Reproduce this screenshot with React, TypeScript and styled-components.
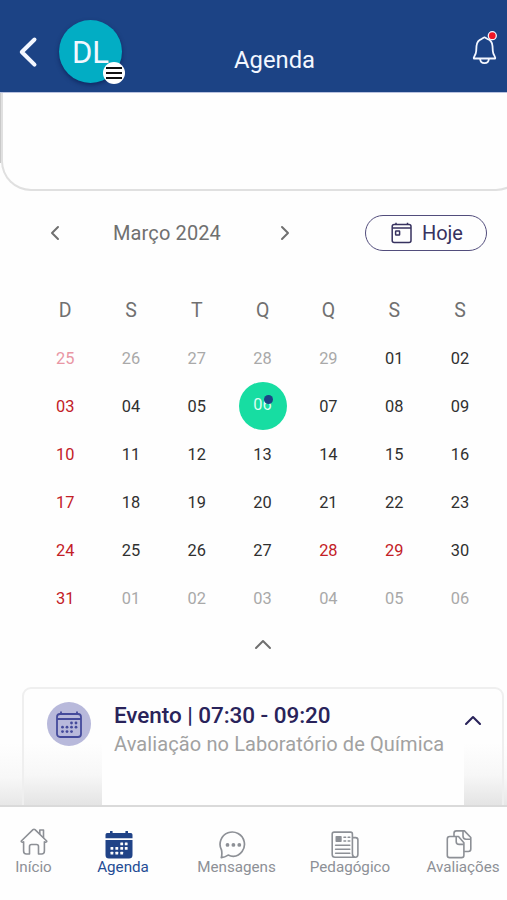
import React from "react";
import styled, { createGlobalStyle } from "styled-components";

const GlobalStyle = createGlobalStyle`
  * { box-sizing: border-box; }
  html, body { margin: 0; background: #fefefe; }
  body { font-family: Roboto, "Noto Sans", sans-serif; overflow: hidden; }
  svg { display: block; flex: none; }
`;

const BareButton = styled.button`
  font: inherit;
  color: inherit;
  background: none;
  border: 0;
  padding: 0;
`;

const Screen = styled.div`
  width: 507px;
  height: 900px;
  display: flex;
  flex-direction: column;
  overflow: hidden;
  background: #fefefe;
`;

const Header = styled.header`
  height: 93px;
  flex: none;
  display: grid;
  grid-template-columns: 59px 64px 1fr 36px;
  align-items: start;
  background: #1c4385;
  border-bottom: 1px solid #b9c2df;
  color: #f3f7ff;
`;

const BackButton = styled(BareButton)`
  padding: 36px 0 0 18px;
`;

const Avatar = styled.div`
  position: relative;
  width: 63px;
  height: 63px;
  margin-top: 20px;
  border-radius: 50%;
  background: #02adc4;
  box-shadow: 0 2px 4px rgba(5, 20, 70, 0.55);
  text-align: center;
  font-size: 31px;
  line-height: 66px;
`;

const MenuBadge = styled.span`
  position: absolute;
  left: 44px;
  top: 42px;
  width: 22px;
  height: 22px;
  border-radius: 50%;
  background: #fff;
  display: grid;
  place-items: center;
`;

const Title = styled.h1`
  margin: 46px 0 0 111px;
  font-size: 23.8px;
  line-height: 28px;
  font-weight: 400;
`;

const BellButton = styled(BareButton)`
  padding: 29px 0 0 0;
`;

const Content = styled.main`
  flex: 1;
  min-height: 0;
  overflow: hidden;
  background: linear-gradient(to bottom, #fefefe 650px, #f8f8f8 684px, #e6e6e6 714px);
`;

const BannerRow = styled.div`
  display: flex;
  align-items: flex-start;
  height: 98px;
`;

const BannerEdge = styled.span`
  flex: none;
  width: 1px;
  height: 70px;
  background: #c9c9c9;
`;

const Banner = styled.section`
  flex: none;
  width: 525px;
  height: 98px;
  border: 2px solid #e0e0e0;
  border-top: 0;
  border-radius: 0 0 30px 30px;
  background: #fefefe;
`;

const MonthBar = styled.div`
  display: grid;
  grid-template-columns: 20px 210px 20px 1fr 122px;
  align-items: center;
  height: 36px;
  margin: 24px 20px 0 45px;
  color: #707070;
  font-size: 20px;
  letter-spacing: 0.12px;
`;

const Month = styled.span`
  text-align: center;
  padding-right: 6px;
`;

const TodayButton = styled(BareButton)`
  height: 36px;
  display: flex;
  align-items: center;
  gap: 9px;
  padding: 0 0 1px 25px;
  border: 1.5px solid #524d7c;
  border-radius: 18px;
  color: #37325f;
  letter-spacing: -0.1px;
`;

const Calendar = styled.div`
  display: grid;
  grid-template-columns: repeat(7, 65.8px);
  grid-auto-rows: 48px;
  margin: 35px 0 0 32.3px;
`;

const Weekday = styled.div`
  display: grid;
  place-items: center;
  color: #707070;
  font-size: 19.5px;
`;

type Tone = "normal" | "holiday" | "outside" | "outsideHoliday" | "selected";

const tones: Record<Tone, string> = {
  normal: "#303030",
  holiday: "#c32026",
  outside: "#a9a9a9",
  outsideHoliday: "#e996a4",
  selected: "#dcfff3",
};

const Day = styled.div<{ $tone: Tone }>`
  display: grid;
  place-items: center;
  font-size: 16.4px;
  color: ${(p) => tones[p.$tone]};
`;

const SelectedDay = styled.span`
  position: relative;
  width: 48px;
  height: 48px;
  border-radius: 50%;
  background: #17dda2;
  text-align: center;
  line-height: 45px;
`;

const EventDot = styled.i`
  position: absolute;
  left: 25px;
  top: 13px;
  width: 9px;
  height: 9px;
  border-radius: 50%;
  background: #1c4385;
`;

const Collapse = styled(BareButton)`
  display: flex;
  width: 18px;
  margin: 17px 0 0 254px;
  color: #707070;
`;

const EventCard = styled.article`
  display: grid;
  grid-template-columns: 78px 1fr 38px;
  align-items: start;
  height: 140px;
  margin: 37px 3px 0 22px;
  border: 2px solid #efefef;
  border-radius: 9px;
  background: linear-gradient(to bottom, #fefefe 54px, #f7f7f7 86px, #e4e4e4 116px);
`;

const EventIcon = styled.div`
  width: 44px;
  height: 44px;
  margin: 13px 0 0 23px;
  border-radius: 50%;
  background: #b8b9db;
  display: grid;
  place-items: center;
`;

const EventBody = styled.div`
  height: 136px;
  padding: 12px 0 0 12px;
  background: #fefefe;
`;

const EventTime = styled.h2`
  margin: 0;
  font-size: 22.5px;
  font-weight: 500;
  letter-spacing: -0.06px;
  line-height: 28px;
  color: #29235a;
  white-space: nowrap;
`;

const EventName = styled.p`
  margin: 2px 0 0;
  font-size: 20px;
  letter-spacing: 0.11px;
  line-height: 26px;
  color: #a1a1a1;
  white-space: nowrap;
`;

const EventToggle = styled(BareButton)`
  padding: 26px 0 0 0;
  color: #29235a;
`;

const TabBar = styled.nav`
  height: 95px;
  flex: none;
  display: grid;
  grid-template-columns: 67px 112px 115px 112px 114px;
  border-top: 2px solid #dadada;
  background: #fefefe;
`;

const Tab = styled(BareButton)<{ $active?: boolean }>`
  display: flex;
  flex-direction: column;
  align-items: center;
  padding-top: 21px;
  font-size: 15.2px;
  line-height: 20px;
  white-space: nowrap;
  color: ${(p) => (p.$active ? "#244c94" : "#8d9096")};
`;

const TabIcon = styled.span<{ $shift: number; $drop: number }>`
  display: block;
  height: 29px;
  padding-top: ${(p) => p.$drop}px;
  margin-left: ${(p) => p.$shift}px;
`;

const Chevron = ({ d, w, h, s = 2 }: { d: string; w: number; h: number; s?: number }) => (
  <svg width={w} height={h} viewBox={`0 0 ${w} ${h}`} fill="none" stroke="currentColor" strokeWidth={s} strokeLinecap="round" strokeLinejoin="round">
    <path d={d} />
  </svg>
);

const BellIcon = () => (
  <svg width="28" height="38" viewBox="0 0 28 38" fill="none" stroke="currentColor" strokeWidth="1.8" strokeLinejoin="round">
    <path d="M2.8 29.5c-.8-1.5 2.2-3 2.4-7.5l.3-5C6 12.4 8.3 10.6 10.8 9.8L13.5 8.3l2.7 1.5c3 .8 5 3.3 5.3 7.2l.3 5c.3 4.5 3.3 6 2.4 7.5Z" />
    <path d="M9.2 30c.2 5.5 8.4 5.5 8.6 0" />
    <circle cx="21.3" cy="6.7" r="4" fill="#f01525" stroke="#f3f7ff" strokeWidth="1.3" />
  </svg>
);

const TodayIcon = () => (
  <svg width="22" height="22" viewBox="0 0 22 22" fill="none" stroke="currentColor" strokeWidth="1.5">
    <rect x="1.2" y="2.6" width="18.8" height="17.8" rx="2" />
    <path d="M1.5 6h18.5M5 .7v2M16.5.7v2" />
    <rect x="4.6" y="9" width="4" height="4" rx=".5" />
  </svg>
);

const dots = [[15.5, 12], [20, 12], [6.5, 16.2], [11, 16.2], [15.5, 16.2], [20, 16.2], [6.5, 20.6], [11, 20.6], [15.5, 20.6]];

const CalendarIcon = () => (
  <svg width="26" height="27" viewBox="0 0 26 27" fill="none" stroke="#444a9b" strokeWidth="1.8">
    <rect x="1" y="3" width="24" height="23" rx="3" />
    <path d="M1 8h24M5 .5V3M21 .5V3" />
    {dots.map(([x, y]) => <circle key={`${x}-${y}`} cx={x} cy={y} r="1.4" stroke="none" fill="#444a9b" />)}
  </svg>
);

const AgendaIcon = () => (
  <svg width="28" height="28" viewBox="0 0 28 28" fill="#204387">
    <path d="M3 2h2V.8a1.3 1.3 0 0 1 2.6 0V2h12.8V.8a1.3 1.3 0 0 1 2.6 0V2h2a2 2 0 0 1 2.5 2v3.3H.5V4A2 2 0 0 1 3 2ZM.5 9h27v15a3.5 3.5 0 0 1-3.5 3.5H4A3.5 3.5 0 0 1 .5 24Z" />
    <g fill="#fefefe">
      {[[15.3, 11.5], [19.8, 11.5], [5.5, 16], [10.4, 16], [15.3, 16], [19.8, 16], [5.5, 20.7], [10.4, 20.7], [15.3, 20.7]].map(([x, y]) => (
        <rect key={`${x}-${y}`} x={x} y={y} width="2.8" height="2.8" rx=".5" />
      ))}
    </g>
  </svg>
);

const HomeIcon = () => (
  <svg width="28" height="28" viewBox="0 0 28 28" fill="none" stroke="currentColor" strokeWidth="1.6" strokeLinejoin="round" strokeLinecap="round">
    <path d="M1.3 13 13 1.7q1-.9 2 0L26.7 13c.3 1-1.2 1.7-2.3.8V23q0 3-2.8 3h-3.1v-7.5q0-2-2-2h-5q-2 0-2 2V26H6.4q-2.8 0-2.8-3v-9.2C2.5 14.7 1 14 1.3 13Z" />
    <path d="M19.8 6V2h3.7v7.6" />
  </svg>
);

const MessageIcon = () => (
  <svg width="28" height="28" viewBox="0 0 28 28" fill="none" stroke="currentColor" strokeWidth="1.7" strokeLinejoin="round">
    <path d="M2.3 26.7c.8-3.1.7-5.4.2-7.7A12.2 12.2 0 1 1 14.3 25.4c-1.8 0-3.6-.5-5.2-1.3-1.8 1.2-4.1 2.3-6.8 2.6Z" />
    <g fill="currentColor" stroke="none">
      <circle cx="8.5" cy="13.9" r="1.9" />
      <circle cx="14.4" cy="13.9" r="1.9" />
      <circle cx="20.3" cy="13.9" r="1.9" />
    </g>
  </svg>
);

const NewsIcon = () => (
  <svg width="28" height="28" viewBox="0 0 28 28" fill="none" stroke="currentColor" strokeWidth="1.6" strokeLinejoin="round">
    <path d="M24.4 26.3H4q-2.8 0-2.8-2.8V3q0-1.9 1.9-1.9h16.5q1.8 0 1.8 1.8v20.2q.3 3.2 3 3.2 2.5 0 2.5-3V9q0-2.4-2.3-2.4h-3.2" />
    <path d="M13 6.3h1.6M17.2 6.3h1.6M13 10h1.6M17.2 10h1.6M4.6 14.3h14.2M4.6 18.3h14.2M4.6 22.3h14.2" strokeLinecap="round" />
    <rect x="4.5" y="5" width="6.2" height="6" rx=".8" fill="currentColor" stroke="none" />
  </svg>
);

const FilesIcon = () => (
  <svg width="28" height="30" viewBox="0 0 28 30" fill="none" stroke="currentColor" strokeWidth="1.6" strokeLinejoin="round">
    <path d="M3.7 6.5h8.8l5.4 6.3v12.4q0 2.4-2.4 2.4H3.7q-2.4 0-2.4-2.4V8.9q0-2.4 2.4-2.4Z" />
    <path d="M10.2 6.7v4.7q0 3 3 3h4.6M8 6.3V3.2q0-2.3 2.4-2.3h8l6.4 6.6V19q0 2.5-2.5 2.5h-4.2" />
    <path d="M17 1v5q0 3.2 3 3.2h4.8" />
  </svg>
);

const makeDay = (n: number, tone: Tone) => ({ label: String(n).padStart(2, "0"), tone });
const sundaysAndHolidays = [3, 10, 17, 24, 28, 29, 31];
const days = [
  makeDay(25, "outsideHoliday"),
  ...[26, 27, 28, 29].map((n) => makeDay(n, "outside")),
  ...Array.from({ length: 31 }, (_, i) =>
    makeDay(i + 1, i === 5 ? "selected" : sundaysAndHolidays.includes(i + 1) ? "holiday" : "normal")
  ),
  ...[1, 2, 3, 4, 5, 6].map((n) => makeDay(n, "outside")),
];

const tabs = [
  { label: "Início", icon: <HomeIcon />, shift: 0, drop: 0 },
  { label: "Agenda", icon: <AgendaIcon />, shift: -9, drop: 3, active: true },
  { label: "Mensagens", icon: <MessageIcon />, shift: -8, drop: 2.5 },
  { label: "Pedagógico", icon: <NewsIcon />, shift: -10, drop: 2.5 },
  { label: "Avaliações", icon: <FilesIcon />, shift: -7, drop: 1.5 },
];

export default function App() {
  return (
    <>
      <GlobalStyle />
      <Screen>
        <Header>
          <BackButton aria-label="Voltar"><Chevron w={20} h={32} s={4} d="M16.5 3.5 3.8 16l12.7 12.7" /></BackButton>
          <Avatar>
            DL
            <MenuBadge>
              <svg width="16" height="12" viewBox="0 0 16 12" stroke="#111" strokeWidth="2"><path d="M0 1h16M0 6h16M0 11h16" /></svg>
            </MenuBadge>
          </Avatar>
          <Title>Agenda</Title>
          <BellButton aria-label="Notificações"><BellIcon /></BellButton>
        </Header>
        <Content>
          <BannerRow><BannerEdge /><Banner /></BannerRow>
          <MonthBar>
            <Chevron w={18} h={16} d="M13 2 7 8l6 6" />
            <Month>Março 2024</Month>
            <Chevron w={18} h={16} d="m7 2 6 6-6 6" />
            <span />
            <TodayButton><TodayIcon />Hoje</TodayButton>
          </MonthBar>
          <Calendar>
            {["D", "S", "T", "Q", "Q", "S", "S"].map((d, i) => <Weekday key={i}>{d}</Weekday>)}
            {days.map((d, i) => (
              <Day key={i} $tone={d.tone}>
                {d.tone === "selected" ? <SelectedDay>{d.label}<EventDot /></SelectedDay> : d.label}
              </Day>
            ))}
          </Calendar>
          <Collapse aria-label="Recolher"><Chevron w={18} h={11} d="m2 9 7-7 7 7" /></Collapse>
          <EventCard>
            <EventIcon><CalendarIcon /></EventIcon>
            <EventBody>
              <EventTime>Evento | 07:30 - 09:20</EventTime>
              <EventName>Avaliação no Laboratório de Química</EventName>
            </EventBody>
            <EventToggle aria-label="Fechar"><Chevron w={18} h={11} s={2.1} d="m2 9 7-7 7 7" /></EventToggle>
          </EventCard>
        </Content>
        <TabBar>
          {tabs.map((t) => (
            <Tab key={t.label} $active={t.active}>
              <TabIcon $shift={t.shift} $drop={t.drop}>{t.icon}</TabIcon>
              {t.label}
            </Tab>
          ))}
        </TabBar>
      </Screen>
    </>
  );
}
